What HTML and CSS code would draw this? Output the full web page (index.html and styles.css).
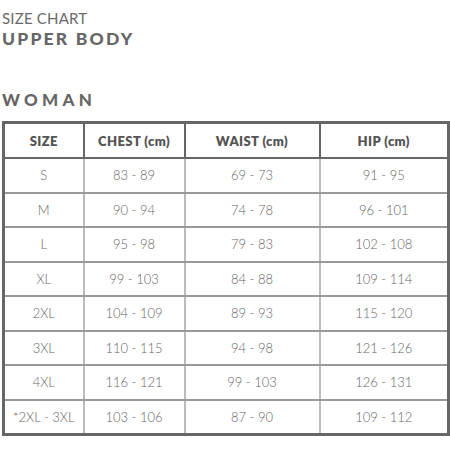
FILE: index.html
```html
<!DOCTYPE html>
<html>
<head>
<meta charset="utf-8">
<link rel="stylesheet" href="styles.css">
</head>
<body>
<div class="page">
  <div class="kicker">SIZE CHART</div>
  <div class="title">UPPER BODY</div>
  <div class="section">WOMAN</div>
  <table class="chart">
    <colgroup>
      <col class="c1"><col class="c2"><col class="c3"><col class="c4">
    </colgroup>
    <thead>
      <tr><th>SIZE</th><th>CHEST (cm)</th><th>WAIST (cm)</th><th>HIP (cm)</th></tr>
    </thead>
    <tbody>
      <tr><td>S</td><td>83 - 89</td><td>69 - 73</td><td>91 - 95</td></tr>
      <tr><td>M</td><td>90 - 94</td><td>74 - 78</td><td>96 - 101</td></tr>
      <tr><td>L</td><td>95 - 98</td><td>79 - 83</td><td>102 - 108</td></tr>
      <tr><td>XL</td><td>99 - 103</td><td>84 - 88</td><td>109 - 114</td></tr>
      <tr><td>2XL</td><td>104 - 109</td><td>89 - 93</td><td>115 - 120</td></tr>
      <tr><td>3XL</td><td>110 - 115</td><td>94 - 98</td><td>121 - 126</td></tr>
      <tr><td>4XL</td><td>116 - 121</td><td>99 - 103</td><td>126 - 131</td></tr>
      <tr><td>*2XL - 3XL</td><td>103 - 106</td><td>87 - 90</td><td>109 - 112</td></tr>
    </tbody>
  </table>
</div>
</body>
</html>
```

FILE: styles.css
```css
html, body {
  margin: 0;
  padding: 0;
  background: #fff;
}
.page {
  padding: 8px 0 0 2px;
  font-family: Lato, "Open Sans", sans-serif;
  color: #666;
}
.kicker {
  font-size: 15px;
  font-weight: 400;
  letter-spacing: 0.2px;
  line-height: 20px;
  color: #6a6a6a;
}
.title {
  margin-top: 1px;
  font-size: 17.5px;
  font-weight: 900;
  letter-spacing: 2.2px;
  line-height: 20px;
  color: #666;
}
.section {
  margin-top: 41px;
  font-size: 17px;
  font-weight: 900;
  letter-spacing: 4.3px;
  line-height: 20px;
  color: #666;
}
.chart {
  margin-top: 11px;
  width: 445px;
  border-collapse: collapse;
  table-layout: fixed;
  border: 3px solid #666;
}
.c1 { width: 80px; }
.c2 { width: 101px; }
.c3 { width: 135px; }
.c4 { width: 129px; }
.chart th {
  height: 33px;
  padding: 0;
  font-size: 13px;
  font-weight: 800;
  letter-spacing: 0.4px;
  color: #555;
  border-right: 2px solid #666;
  border-bottom: 2px solid #666;
  text-align: center;
}
.chart td {
  height: 32.5px;
  padding: 0;
  font-size: 13px;
  font-weight: 300;
  color: #666;
  text-align: center;
  border-right: 2px solid #bbb;
  border-bottom: 2px solid #999;
}
```
